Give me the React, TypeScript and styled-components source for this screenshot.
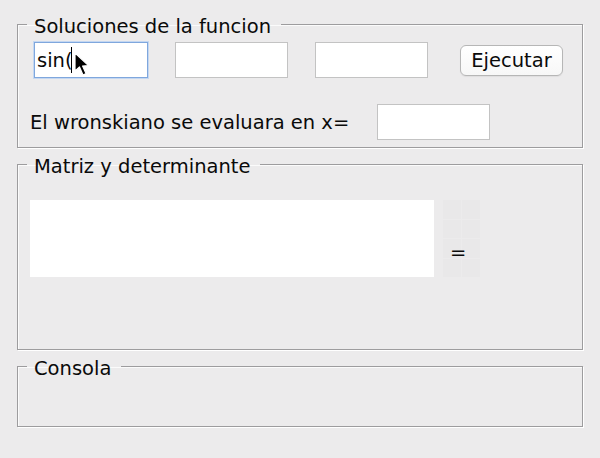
import React from "react";
import styled, { createGlobalStyle } from "styled-components";

const Global = createGlobalStyle`
  html, body { margin: 0; padding: 0; background: #ecebec; }
  body { font-family: "DejaVu Sans", "Liberation Sans", sans-serif; color: #0a0a0a; }
`;

const Page = styled.div`
  width: 600px;
  height: 458px;
  box-sizing: border-box;
  padding: 11px 17px 0 17px;
  display: flex;
  flex-direction: column;
  gap: 3px;
  background: #ecebec;
`;

const Group = styled.fieldset<{ $h: number }>`
  margin: 0;
  padding: 0;
  height: ${(p) => p.$h}px;
  box-sizing: border-box;
  border: 1px solid #9d9c9e;
  box-shadow: 1px 1px 0 #ffffff, inset 1px 1px 0 #fbfbfb;
  min-width: 0;
`;

const Legend = styled.legend`
  margin-left: 9px;
  padding: 4px 10px 0 7px;
  font-size: 19.5px;
  line-height: 23px;
  color: #0a0a0a;
`;

const Body = styled.div`
  display: flex;
  flex-direction: column;
`;

const Row = styled.div<{ $top: number; $left: number }>`
  display: flex;
  align-items: center;
  margin-top: ${(p) => p.$top}px;
  padding-left: ${(p) => p.$left}px;
`;

const Field = styled.div<{ $focus?: boolean; $gap?: number; $w?: number }>`
  position: relative;
  width: ${(p) => p.$w ?? 113}px;
  height: 36px;
  box-sizing: border-box;
  background: #fff;
  border: 1px solid ${(p) => (p.$focus ? "#7fa7dd" : "#c3c3c3")};
  box-shadow: ${(p) => (p.$focus ? "0 0 0 1px #c4d7f1" : "none")};
  margin-right: ${(p) => p.$gap ?? 27}px;
  font-size: 19.5px;
  display: flex;
  align-items: center;
  padding-left: 2px;
  flex-shrink: 0;
`;

const Caret = styled.span`
  display: inline-block;
  width: 1px;
  height: 26px;
  background: #000;
  margin-left: -2px;
`;

const Cursor = styled.svg`
  position: absolute;
  left: 39px;
  top: 9px;
`;

const Button = styled.button`
  width: 103px;
  height: 31px;
  border: 1px solid #b6b6b6;
  border-radius: 6px;
  background: linear-gradient(#ffffff, #f7f7f7);
  box-shadow: 0 1px 1px rgba(0, 0, 0, 0.06);
  font-family: inherit;
  font-size: 19.5px;
  color: #0a0a0a;
  padding: 0;
`;

const Label = styled.span`
  font-size: 19.5px;
  margin-right: 28px;
  white-space: nowrap;
`;

const MatrixRow = styled.div`
  display: flex;
  align-items: stretch;
  margin-top: 22px;
  padding-left: 12px;
`;

const MatrixBox = styled.div`
  width: 404px;
  height: 77px;
  background: #ffffff;
`;

const Result = styled.div`
  width: 37px;
  margin-left: 9px;
  display: grid;
  grid-template-columns: 1fr 1fr;
  grid-template-rows: repeat(4, 1fr);
  gap: 1px;
  position: relative;
`;

const Cell = styled.div`
  background: #e9e8e9;
`;

const Equals = styled.span`
  position: absolute;
  left: 7px;
  top: 43px;
  font-size: 19.5px;
  line-height: 20px;
`;

export default function App() {
  return (
    <>
      <Global />
      <Page>
        <Group $h={137}>
          <Legend>Soluciones de la funcion</Legend>
          <Body>
            <Row $top={4} $left={16}>
              <Field $focus $w={114}>
                sin(
                <Caret />
                <Cursor width="16" height="26" viewBox="0 0 16 26">
                  <path
                    d="M1 1 L1 19 L5.5 15 L9 23 L12 21.6 L8.6 14 L14.5 13.6 Z"
                    fill="#000"
                    stroke="#fff"
                    strokeWidth="1.2"
                    strokeLinejoin="round"
                  />
                </Cursor>
              </Field>
              <Field />
              <Field $gap={32} />
              <Button>Ejecutar</Button>
            </Row>
            <Row $top={26} $left={12}>
              <Label>El wronskiano se evaluara en x=</Label>
              <Field />
            </Row>
          </Body>
        </Group>
        <Group $h={199}>
          <Legend>Matriz y determinante</Legend>
          <MatrixRow>
            <MatrixBox />
            <Result>
              <Cell />
              <Cell />
              <Cell />
              <Cell />
              <Cell />
              <Cell />
              <Cell />
              <Cell />
              <Equals>=</Equals>
            </Result>
          </MatrixRow>
        </Group>
        <Group $h={74}>
          <Legend>Consola</Legend>
        </Group>
      </Page>
    </>
  );
}
